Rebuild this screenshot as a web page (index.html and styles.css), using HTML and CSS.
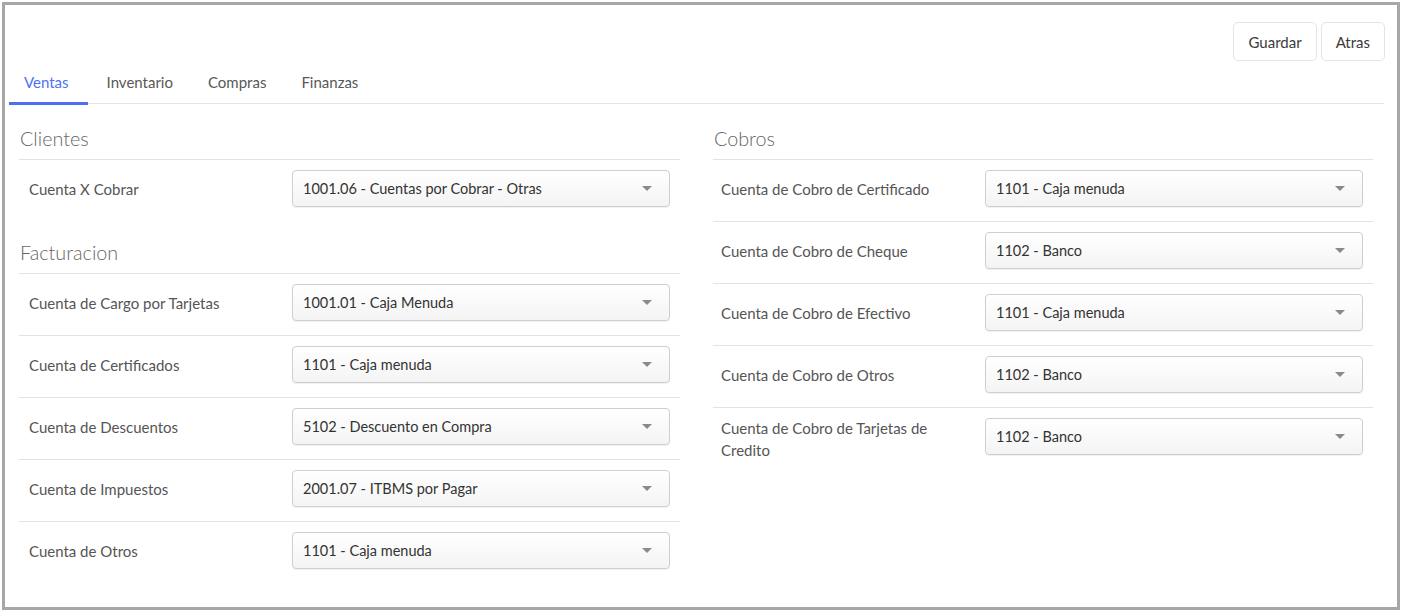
FILE: index.html
```html
<!DOCTYPE html>
<html lang="es">
<head>
<meta charset="utf-8">
<title>Cuentas</title>
<link rel="stylesheet" href="styles.css">
</head>
<body>
<div class="frame">
  <div class="topbar">
    <button class="btn">Guardar</button>
    <button class="btn">Atras</button>
  </div>
  <div class="tabs">
    <div class="tab active">Ventas</div>
    <div class="tab">Inventario</div>
    <div class="tab">Compras</div>
    <div class="tab">Finanzas</div>
  </div>
  <div class="content">
    <div class="col">
      <h3 class="section-title">Clientes</h3>
      <div class="row"><div class="label">Cuenta X Cobrar</div><div class="select">1001.06 - Cuentas por Cobrar - Otras</div></div>
      <h3 class="section-title second">Facturacion</h3>
      <div class="row"><div class="label">Cuenta de Cargo por Tarjetas</div><div class="select">1001.01 - Caja Menuda</div></div>
      <div class="row"><div class="label">Cuenta de Certificados</div><div class="select">1101 - Caja menuda</div></div>
      <div class="row"><div class="label">Cuenta de Descuentos</div><div class="select">5102 - Descuento en Compra</div></div>
      <div class="row"><div class="label">Cuenta de Impuestos</div><div class="select">2001.07 - ITBMS por Pagar</div></div>
      <div class="row"><div class="label">Cuenta de Otros</div><div class="select">1101 - Caja menuda</div></div>
    </div>
    <div class="col">
      <h3 class="section-title">Cobros</h3>
      <div class="row"><div class="label">Cuenta de Cobro de Certificado</div><div class="select">1101 - Caja menuda</div></div>
      <div class="row"><div class="label">Cuenta de Cobro de Cheque</div><div class="select">1102 - Banco</div></div>
      <div class="row"><div class="label">Cuenta de Cobro de Efectivo</div><div class="select">1101 - Caja menuda</div></div>
      <div class="row"><div class="label">Cuenta de Cobro de Otros</div><div class="select">1102 - Banco</div></div>
      <div class="row tall"><div class="label">Cuenta de Cobro de Tarjetas de Credito</div><div class="select">1102 - Banco</div></div>
    </div>
  </div>
</div>
</body>
</html>
```
FILE: styles.css
```css
* { box-sizing: border-box; }
html, body { margin: 0; padding: 0; background: #fff; }
body {
  font-family: Lato, "Open Sans", "Liberation Sans", sans-serif;
  color: #444;
}
.frame {
  margin: 2px;
  height: 608px;
  border: 3px solid #a6a8a7;
  background: #fff;
  overflow: hidden;
}
.topbar {
  display: flex;
  justify-content: flex-end;
  gap: 4px;
  padding: 17px 12px 0 0;
}
.btn {
  height: 39px;
  padding: 0 14px;
  font-family: Lato, "Liberation Sans", sans-serif;
  font-size: 15px;
  color: #3a3a3a;
  background: #fff;
  border: 1px solid #e4e4e4;
  border-radius: 5px;
}
.tabs {
  display: flex;
  margin: 1px 13px 0 4px;
  height: 42px;
  border-bottom: 1px solid #e6e6e6;
}
.tab {
  padding: 0 16px;
  margin-right: 3px;
  font-size: 15px;
  line-height: 41px;
  color: #585858;
  border-bottom: 3px solid transparent;
  margin-bottom: -2px;
}
.tab:first-child { padding: 0 19px 0 15px; }
.tab.active {
  color: #4d72f5;
  border-bottom-color: #4d6ff4;
}
.content {
  display: grid;
  grid-template-columns: 661px 660px;
  column-gap: 33px;
  padding-left: 14px;
}
.section-title {
  margin: 23px 0 0;
  padding: 0 0 10px 1px;
  font-size: 19.8px;
  line-height: 22px;
  font-weight: 300;
  color: #666;
}
.section-title.second { margin-top: 20px; }
.row {
  display: flex;
  align-items: center;
  border-top: 1px solid #e3e3e3;
  padding: 10px 10px 14px;
}
.col:last-child .row { padding-left: 8px; }
.label {
  width: 263px;
  flex: none;
  font-size: 15px;
  line-height: 22px;
  color: #555;
  padding-right: 20px;
}
.col:last-child .label { width: 264px; }
.row.tall { align-items: flex-start; padding-top: 10px; }
.row.tall .label { margin-top: -1px; }
.select {
  position: relative;
  flex: 1;
  height: 37px;
  line-height: 35px;
  padding-left: 10px;
  font-size: 14.5px;
  color: #333;
  border: 1px solid #cfcfcf;
  border-radius: 4px;
  background: linear-gradient(#ffffff, #f4f4f4);
  box-shadow: 0 1px 1px rgba(0,0,0,0.06);
}
.select::after {
  content: "";
  position: absolute;
  right: 17px;
  top: 15px;
  border-left: 5px solid transparent;
  border-right: 5px solid transparent;
  border-top: 5px solid #8a8a8a;
}
```
